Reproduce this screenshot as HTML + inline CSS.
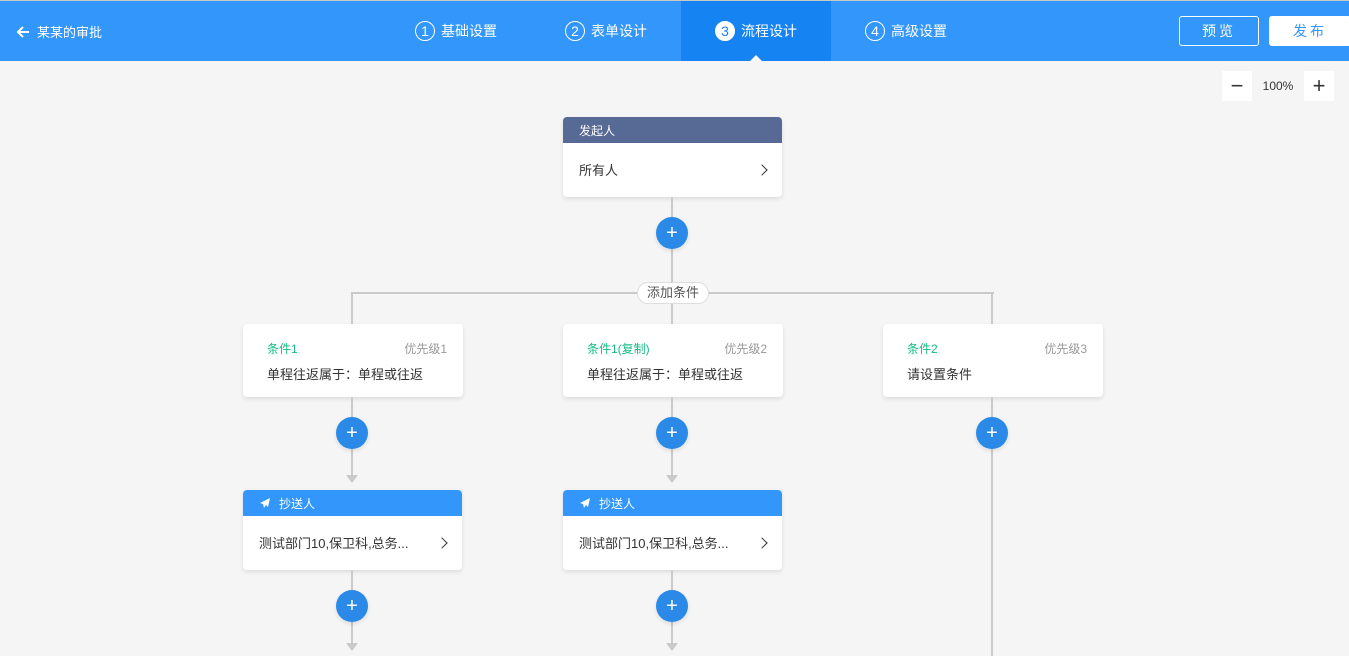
<!DOCTYPE html>
<html><head><meta charset="utf-8"><style>
*{margin:0;padding:0;box-sizing:border-box}
body{width:1349px;height:656px;overflow:hidden;background:#f5f5f5;font-family:"Liberation Sans","Noto Sans CJK SC",sans-serif;position:relative}
.abs{position:absolute}
.hdr{left:0;top:0;width:1349px;height:61px;background:#3296fa;border-top:1px solid #c8c8c8}
.tab{top:0;height:61px;color:#fff;font-size:14px;display:flex;align-items:center;gap:6px}
.num{width:20px;height:20px;border:1px solid #fff;border-radius:50%;font-size:14px;display:flex;align-items:center;justify-content:center}
.card{background:#fff;border-radius:4px;box-shadow:0 2px 4px rgba(0,0,0,.1)}
.vl{background:#cacaca;width:2px}
.plus{width:32px;height:32px;border-radius:50%;background:#2b8ae8;color:#fff;font-size:20px;display:flex;align-items:center;justify-content:center;box-shadow:0 2px 4px rgba(0,0,0,.1)}
.arr{width:0;height:0;border-left:6px solid transparent;border-right:6px solid transparent;border-top:8px solid #cacaca}
.ct{font-size:12px;color:#15bc83}
.pr{font-size:12px;color:#999}
.cb{font-size:14px;color:#333}
.chev{width:8px;height:8px;border-right:1.5px solid #333;border-top:1.5px solid #333;transform:rotate(45deg)}
</style></head><body>
<div class="abs hdr"></div>
<div class="abs" style="left:15px;top:22px;color:#fff;font-size:13px;display:flex;align-items:center;gap:6px">
<svg width="16" height="16" viewBox="0 0 16 16"><path d="M14 8H3M8 3L3 8l5 5" stroke="#fff" stroke-width="2" fill="none"/></svg>某某的审批</div>
<div class="abs tab" style="left:415px"><span class="num">1</span>基础设置</div>
<div class="abs tab" style="left:565px"><span class="num">2</span>表单设计</div>
<div class="abs" style="left:681px;top:1px;width:150px;height:60px;background:#1583f2"></div>
<div class="abs tab" style="left:715px"><span class="num" style="background:#fff;color:#1583f2">3</span>流程设计</div>
<div class="abs" style="left:750px;top:55px;border-left:6px solid transparent;border-right:6px solid transparent;border-bottom:6px solid #f5f5f5"></div>
<div class="abs tab" style="left:865px"><span class="num">4</span>高级设置</div>
<div class="abs" style="left:1179px;top:16px;width:80px;height:30px;border:1px solid #fff;border-radius:3px;color:#fff;font-size:14px;display:flex;align-items:center;justify-content:center;letter-spacing:3px">预览</div>
<div class="abs" style="left:1269px;top:16px;width:82px;height:30px;background:#fff;border-radius:3px;color:#3296fa;font-size:14px;display:flex;align-items:center;justify-content:center;letter-spacing:3px">发布</div>
<div class="abs" style="left:1222px;top:71px;width:30px;height:30px;background:#fff;display:flex;align-items:center;justify-content:center;font-size:22px;color:#333">−</div>
<div class="abs" style="left:1256px;top:79px;width:44px;text-align:center;font-size:12px;color:#333">100%</div>
<div class="abs" style="left:1304px;top:71px;width:30px;height:30px;background:#fff;display:flex;align-items:center;justify-content:center;font-size:22px;color:#333">+</div>

<div class="abs card" style="left:563px;top:117px;width:219px;height:80px;overflow:hidden">
<div style="height:26px;background:#576a95;color:#fff;font-size:12px;padding:5px 16px">发起人</div>
<div class="cb" style="padding:17px 16px;font-size:13px">所有人</div></div>
<div class="abs chev" style="left:758px;top:166px"></div>
<div class="abs vl" style="left:671px;top:197px;height:99px"></div>
<div class="abs plus" style="left:656px;top:217px">+</div>
<div class="abs" style="left:352px;top:292px;width:642px;height:2px;background:#cacaca"></div>
<div class="abs vl" style="left:351px;top:292px;height:32px"></div>
<div class="abs vl" style="left:671px;top:292px;height:32px"></div>
<div class="abs vl" style="left:991px;top:292px;height:32px"></div>
<div class="abs" style="left:637px;top:282px;width:72px;height:22px;background:#fff;border:1px solid #ddd;border-radius:11px;font-size:13px;color:#555;text-align:center;line-height:20px">添加条件</div>

<div class="abs card" style="left:243px;top:324px;width:220px;height:73px"><div class="abs ct" style="left:24px;top:16px">条件1</div><div class="abs pr" style="right:16px;top:16px">优先级1</div><div class="abs cb" style="left:24px;top:40px;font-size:13px">单程往返属于：单程或往返</div></div>
<div class="abs card" style="left:563px;top:324px;width:220px;height:73px"><div class="abs ct" style="left:24px;top:16px">条件1(复制)</div><div class="abs pr" style="right:16px;top:16px">优先级2</div><div class="abs cb" style="left:24px;top:40px;font-size:13px">单程往返属于：单程或往返</div></div>
<div class="abs card" style="left:883px;top:324px;width:220px;height:73px"><div class="abs ct" style="left:24px;top:16px">条件2</div><div class="abs pr" style="right:16px;top:16px">优先级3</div><div class="abs cb" style="left:24px;top:40px;font-size:13px">请设置条件</div></div>

<div class="abs vl" style="left:351px;top:397px;height:80px"></div>
<div class="abs vl" style="left:671px;top:397px;height:80px"></div>
<div class="abs vl" style="left:991px;top:397px;height:259px"></div>
<div class="abs plus" style="left:336px;top:417px">+</div>
<div class="abs plus" style="left:656px;top:417px">+</div>
<div class="abs plus" style="left:976px;top:417px">+</div>
<div class="abs arr" style="left:346px;top:475px"></div>
<div class="abs arr" style="left:666px;top:475px"></div>

<div class="abs card" style="left:243px;top:490px;width:219px;height:80px;overflow:hidden">
<div style="height:26px;background:#3296fa;color:#fff;font-size:12px;padding:5px 16px;display:flex;align-items:center;gap:8px"><svg width="12" height="12" viewBox="0 0 12 12"><path d="M11 1L1 6l3 1 1 4 2-3 2 2z" fill="#fff"/></svg>抄送人</div>
<div class="cb" style="padding:17px 16px;font-size:13px">测试部门10,保卫科,总务...</div></div>
<div class="abs chev" style="left:438px;top:539px"></div>
<div class="abs card" style="left:563px;top:490px;width:219px;height:80px;overflow:hidden">
<div style="height:26px;background:#3296fa;color:#fff;font-size:12px;padding:5px 16px;display:flex;align-items:center;gap:8px"><svg width="12" height="12" viewBox="0 0 12 12"><path d="M11 1L1 6l3 1 1 4 2-3 2 2z" fill="#fff"/></svg>抄送人</div>
<div class="cb" style="padding:17px 16px;font-size:13px">测试部门10,保卫科,总务...</div></div>
<div class="abs chev" style="left:758px;top:539px"></div>

<div class="abs vl" style="left:351px;top:570px;height:75px"></div>
<div class="abs vl" style="left:671px;top:570px;height:75px"></div>
<div class="abs plus" style="left:336px;top:590px">+</div>
<div class="abs plus" style="left:656px;top:590px">+</div>
<div class="abs arr" style="left:346px;top:643px"></div>
<div class="abs arr" style="left:666px;top:643px"></div>
</body></html>
